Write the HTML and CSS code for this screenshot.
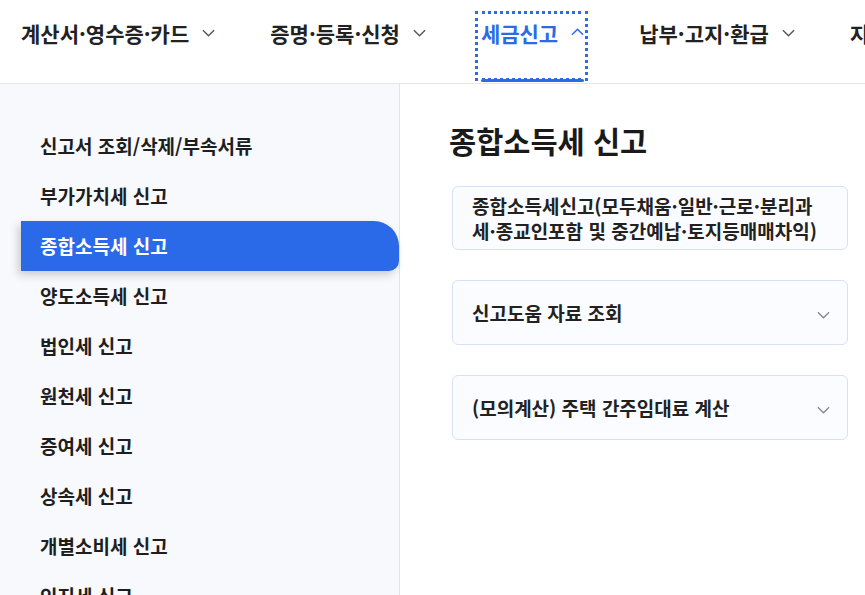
FILE: index.html
```html
<!DOCTYPE html>
<html lang="ko">
<head>
<meta charset="utf-8">
<link rel="stylesheet" href="styles.css">
</head>
<body>
<header class="gnb">
  <nav class="gnb-list">
    <a class="gnb-item">계산서·영수증·카드<svg class="chev" viewBox="0 0 14 8"><path d="M1 1l6 6 6-6"/></svg></a>
    <a class="gnb-item">증명·등록·신청<svg class="chev" viewBox="0 0 14 8"><path d="M1 1l6 6 6-6"/></svg></a>
    <a class="gnb-item active">세금신고<svg class="chev" viewBox="0 0 14 8"><path d="M1 7l6-6 6 6"/></svg></a>
    <a class="gnb-item">납부·고지·환급<svg class="chev" viewBox="0 0 14 8"><path d="M1 1l6 6 6-6"/></svg></a>
    <a class="gnb-item">지급명세·자료·공익법인<svg class="chev" viewBox="0 0 14 8"><path d="M1 1l6 6 6-6"/></svg></a>
  </nav>
</header>
<div class="wrap">
  <aside class="lnb">
    <ul class="lnb-list">
      <li class="lnb-item">신고서 조회/삭제/부속서류</li>
      <li class="lnb-item">부가가치세 신고</li>
      <li class="lnb-item on">종합소득세 신고</li>
      <li class="lnb-item">양도소득세 신고</li>
      <li class="lnb-item">법인세 신고</li>
      <li class="lnb-item">원천세 신고</li>
      <li class="lnb-item">증여세 신고</li>
      <li class="lnb-item">상속세 신고</li>
      <li class="lnb-item">개별소비세 신고</li>
      <li class="lnb-item">인지세 신고</li>
    </ul>
  </aside>
  <main class="content">
    <h1 class="title">종합소득세 신고</h1>
    <div class="card">종합소득세신고(모두채움·일반·근로·분리과세·종교인포함 및 중간예납·토지등매매차익)</div>
    <div class="card fold"><span>신고도움 자료 조회</span><svg class="cchev" viewBox="0 0 14 8"><path d="M1 1l6 6 6-6"/></svg></div>
    <div class="card fold"><span>(모의계산) 주택 간주임대료 계산</span><svg class="cchev" viewBox="0 0 14 8"><path d="M1 1l6 6 6-6"/></svg></div>
  </main>
</div>
</body>
</html>
```
FILE: styles.css
```css
* { box-sizing: border-box; }
html, body { margin: 0; padding: 0; }
body {
  width: 865px;
  height: 595px;
  overflow: hidden;
  font-family: "Noto Sans CJK KR", "Noto Sans", sans-serif;
  color: #1a1a1a;
  background: #fff;
}
.gnb {
  height: 84px;
  border-bottom: 1px solid #e6e6e8;
  background: #fff;
  overflow: hidden;
}
.gnb-list {
  display: flex;
  padding: 11px 0 0 15px;
  gap: 45px;
  white-space: nowrap;
}
.gnb-item {
  display: flex;
  align-items: flex-start;
  gap: 13px;
  height: 70px;
  padding: 7px 4px 0 6px;
  font-size: 21px;
  font-weight: 700;
  line-height: 30px;
  color: #222;
  position: relative;
  flex: none;
}
.gnb-item .chev {
  width: 13px;
  height: 8px;
  margin-top: 11px;
  fill: none;
  stroke: #555a66;
  stroke-width: 1.6;
}
.gnb-item.active {
  color: #2b6ce6;
  outline: 3px dotted #2b6ce6;
  outline-offset: -3px;
}
.gnb-item.active .chev { stroke: #2b6ce6; margin-top: 10px; }
.gnb-item.active::after {
  content: "";
  position: absolute;
  left: 6px;
  right: 4px;
  bottom: -1px;
  height: 3.5px;
  border-radius: 2px;
  background: #2b6ce6;
}
.wrap {
  display: flex;
  height: 511px;
}
.lnb {
  width: 400px;
  flex: none;
  background: #f8f9fd;
  border-right: 1px solid #dbe3f4;
}
.lnb-list {
  list-style: none;
  margin: 0;
  padding: 37px 0 0 21px;
}
.lnb-item {
  height: 50px;
  display: flex;
  align-items: center;
  padding-left: 19px;
  padding-bottom: 2px;
  font-size: 19px;
  font-weight: 700;
  color: #1e1e1e;
}
.lnb-item.on {
  background: #2a6ae8;
  color: #fff;
  border-radius: 0 25px 10px 0;
  box-shadow: -3px 4px 8px rgba(0, 0, 0, 0.18);
}
.content {
  flex: 1;
  padding: 0 17px 0 49px;
}
.title {
  margin: 35px 0 0;
  font-size: 29.5px;
  font-weight: 700;
  line-height: 42px;
  color: #1a1a1a;
}
.card {
  margin-top: 25px;
  margin-left: 3px;
  background: #fbfcff;
  border: 1px solid #d6e1f7;
  border-radius: 6px;
  padding: 6px 20px 6px 19px;
  font-size: 19px;
  font-weight: 700;
  line-height: 25px;
  color: #222;
}
.card + .card { margin-top: 30px; }
.card.fold {
  height: 65px;
  display: flex;
  align-items: center;
  justify-content: space-between;
}
.cchev {
  width: 13px;
  height: 8px;
  margin-right: -3px;
  margin-top: 4px;
  fill: none;
  stroke: #808590;
  stroke-width: 1.3;
}
```
